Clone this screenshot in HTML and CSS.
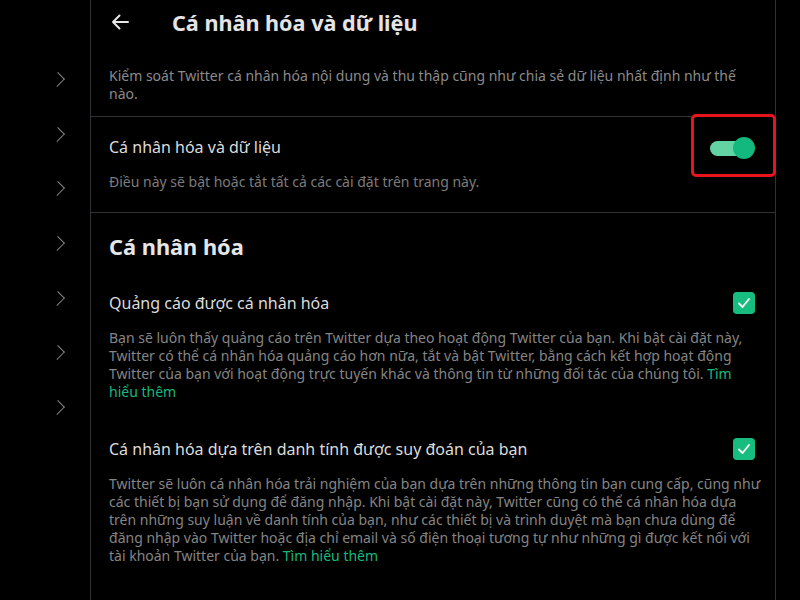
FILE: index.html
```html
<!DOCTYPE html>
<html lang="vi">
<head>
  <meta charset="UTF-8" />
  <meta name="viewport" content="width=device-width, initial-scale=1.0" />
  <title>Cá nhân hóa và dữ liệu</title>
  <link rel="stylesheet" href="styles.css">
</head>
<body>
  <div class="sidebar">
    <div class="nav-item"><span class="chev"></span></div>
    <div class="nav-item"><span class="chev"></span></div>
    <div class="nav-item"><span class="chev"></span></div>
    <div class="nav-item"><span class="chev"></span></div>
    <div class="nav-item"><span class="chev"></span></div>
    <div class="nav-item"><span class="chev"></span></div>
    <div class="nav-item"><span class="chev"></span></div>
  </div>

  <main class="panel">
    <header class="panel-header">
      <svg class="back" width="20" height="20" viewBox="0 0 20 20">
        <path d="M18 10H3M9.5 3.5L3 10l6.5 6.5" fill="none" stroke="#e7e7e7" stroke-width="2" stroke-linecap="round" stroke-linejoin="round"/>
      </svg>
      <h1>Cá nhân hóa và dữ liệu</h1>
    </header>

    <p class="intro">Kiểm soát Twitter cá nhân hóa nội dung và thu thập cũng như chia sẻ dữ liệu nhất định như thế nào.</p>

    <section class="master">
      <div class="row-head">
        <span class="row-title">Cá nhân hóa và dữ liệu</span>
        <div class="toggle"><span class="track"></span><span class="knob"></span></div>
      </div>
      <p class="row-sub">Điều này sẽ bật hoặc tắt tất cả các cài đặt trên trang này.</p>
      <div class="highlight"></div>
    </section>

    <section class="group">
      <h2>Cá nhân hóa</h2>

      <div class="option">
        <div class="row-head">
          <span class="row-title">Quảng cáo được cá nhân hóa</span>
          <span class="check"><svg width="22" height="22" viewBox="0 0 22 22"><path d="M6 11.5l3.5 3.5L16 7" fill="none" stroke="#fff" stroke-width="1.8" stroke-linecap="round" stroke-linejoin="round"/></svg></span>
        </div>
        <p class="desc">Bạn sẽ luôn thấy quảng cáo trên Twitter dựa theo hoạt động Twitter của bạn. Khi bật cài đặt này, Twitter có thể cá nhân hóa quảng cáo hơn nữa, tắt và bật Twitter, bằng cách kết hợp hoạt động Twitter của bạn với hoạt động trực tuyến khác và thông tin từ những đối tác của chúng tôi. <a href="#">Tìm hiểu thêm</a></p>
      </div>

      <div class="option">
        <div class="row-head">
          <span class="row-title">Cá nhân hóa dựa trên danh tính được suy đoán của bạn</span>
          <span class="check"><svg width="22" height="22" viewBox="0 0 22 22"><path d="M6 11.5l3.5 3.5L16 7" fill="none" stroke="#fff" stroke-width="1.8" stroke-linecap="round" stroke-linejoin="round"/></svg></span>
        </div>
        <p class="desc">Twitter sẽ luôn cá nhân hóa trải nghiệm của bạn dựa trên những thông tin bạn cung cấp, cũng như các thiết bị bạn sử dụng để đăng nhập. Khi bật cài đặt này, Twitter cũng có thể cá nhân hóa dựa trên những suy luận về danh tính của bạn, như các thiết bị và trình duyệt mà bạn chưa dùng để đăng nhập vào Twitter hoặc địa chỉ email và số điện thoại tương tự như những gì được kết nối với tài khoản Twitter của bạn. <a href="#">Tìm hiểu thêm</a></p>
      </div>
    </section>
  </main>
</body>
</html>
```

FILE: styles.css
```css
html, body { height: 100%; }
body { margin: 0; background: #000; color: #dadada; font-family: "Noto Sans", "Open Sans", sans-serif; display: flex; overflow: hidden; }

.sidebar { width: 90px; padding-top: 52px; flex-shrink: 0; }
.nav-item { height: 54.7px; display: flex; align-items: center; justify-content: flex-end; padding-right: 23px; }
.chev { width: 10px; height: 10px; border-top: 1.5px solid #8a8a8a; border-right: 1.5px solid #8a8a8a; transform: rotate(45deg) scaleX(0.9); margin-right: 4px; }

.panel { box-sizing: border-box; width: 686px; flex-shrink: 0; padding: 0 20px 0 18px; border-left: 1px solid #2f3336; border-right: 1px solid #2f3336; min-height: 100%; }

.panel-header { height: 44px; display: flex; align-items: center; }
.back { margin-left: 1px; }
.panel-header h1 { margin: 0 0 0 42px; font-size: 21.6px; font-weight: 700; color: #e4e4e4; }

.intro { margin: 0 -20px 0 -18px; padding: 23px 20px 13px 18px; font-size: 14px; line-height: 18px; color: #8b8b8b; border-bottom: 1px solid #2f3336; }

.master { position: relative; padding: 19px 20px 21px 18px; margin: 0 -20px 0 -18px; border-bottom: 1px solid #2f3336; }
.row-head { display: flex; align-items: center; justify-content: space-between; height: 22px; }
.row-title { font-size: 16px; color: #dcdcdc; }
.row-sub { margin: 15px 0 0; font-size: 14px; line-height: 18px; color: #7c7c7c; }

.toggle { position: relative; width: 46px; height: 22px; margin-top: 1px; }
.track { position: absolute; left: 1px; top: 4px; width: 34px; height: 15px; border-radius: 8px; background: #63d3a4; }
.knob { position: absolute; right: 0; top: 0; width: 22px; height: 22px; border-radius: 50%; background: #12b87d; }
.highlight { position: absolute; left: 600px; top: -3px; width: 79px; height: 57px; border: 3px solid #e8141c; border-radius: 5px; }

.group { padding-top: 20px; }
.group h2 { margin: 0; font-size: 21.8px; line-height: 28px; font-weight: 700; color: #e6e6e6; }
.option { margin-top: 31px; }
.option + .option { margin-top: 37px; }
.check { width: 22px; height: 22px; border-radius: 4px; background: #17bd7f; display: flex; }
.desc { margin: 15px -7px 0 0; font-size: 14px; line-height: 18px; color: #858585; }
.desc a { color: #17b97c; text-decoration: none; }
```
